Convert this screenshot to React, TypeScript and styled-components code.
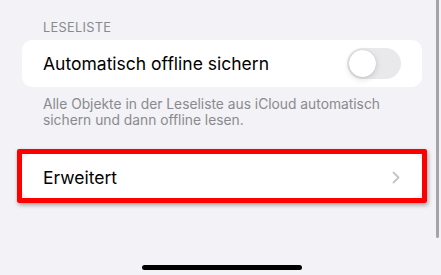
import React, {FC, useState} from 'react';
import styled, {createGlobalStyle} from "styled-components";

const GlobalStyle = createGlobalStyle`
  html, body {
    margin: 0;
    padding: 0;
    background: #f2f2f7;
  }

  body {
    font-family: Inter, "Liberation Sans", sans-serif;
    -webkit-font-smoothing: antialiased;
  }
`

type ToggleType = {
  checked: boolean
  onChange: (value: boolean) => void
}

const Toggle: FC<ToggleType> = ({checked, onChange}) => {
  return (
    <Track $on={checked} onClick={() => onChange(!checked)}>
      <Knob $on={checked}/>
    </Track>
  );
};

const Chevron = () => (
  <svg width="8" height="13" viewBox="0 0 8 13" fill="none">
    <path d="M1.5 1.5L6.5 6.5L1.5 11.5" stroke="#c4c4c7" strokeWidth="1.8" strokeLinecap="round"
          strokeLinejoin="round"/>
  </svg>
)

const App = () => {
  const [offline, setOffline] = useState(false)

  return (
    <Screen>
      <GlobalStyle/>
      <Content>
        <SectionHeader>LESELISTE</SectionHeader>
        <Card>
          <Row>
            <Label>Automatisch offline sichern</Label>
            <Toggle checked={offline} onChange={setOffline}/>
          </Row>
        </Card>
        <Footer>
          Alle Objekte in der Leseliste aus iCloud automatisch sichern und dann offline lesen.
        </Footer>

        <Highlight>
          <Card>
            <Row $compact>
              <Label>Erweitert</Label>
              <Chevron/>
            </Row>
          </Card>
        </Highlight>
      </Content>

      <ScrollBar/>
      <HomeIndicator/>
    </Screen>
  );
};

export default App;

const Screen = styled.div`
  position: relative;
  width: 441px;
  height: 275px;
  overflow: hidden;
  background: #f2f2f7;
`

const Content = styled.div`
  padding: 20px 19px 0 22px;
  display: flex;
  flex-direction: column;
`

const SectionHeader = styled.div`
  padding-left: 21px;
  font-size: 12.8px;
  line-height: 16px;
  letter-spacing: 0.3px;
  color: #8a8a8e;
  margin-bottom: 4px;
`

const Card = styled.div`
  background: #ffffff;
  border-radius: 10px;
  overflow: hidden;
`

const Row = styled.div<{ $compact?: boolean }>`
  height: ${({$compact}) => $compact ? '44px' : '47px'};
  padding: ${({$compact}) => $compact ? '2px 22px 0 21px' : '0 21px'};
  box-sizing: border-box;
  display: flex;
  align-items: center;
  justify-content: space-between;
`

const Label = styled.span`
  font-size: 17.5px;
  color: #000000;
`

const Track = styled.div<{ $on: boolean }>`
  position: relative;
  width: 54px;
  height: 31px;
  border-radius: 16px;
  background: ${({$on}) => $on ? '#34c759' : '#e9e9eb'};
  cursor: pointer;
  transition: background 0.2s;
`

const Knob = styled.div<{ $on: boolean }>`
  position: absolute;
  top: 2px;
  left: ${({$on}) => $on ? '25px' : '2px'};
  width: 27px;
  height: 27px;
  border-radius: 50%;
  background: #ffffff;
  box-shadow: 0 2px 6px rgba(0, 0, 0, 0.15), 0 0 1px rgba(0, 0, 0, 0.2);
  transition: left 0.2s;
`

const Footer = styled.p`
  margin: 9px 0 0;
  padding: 0 21px;
  font-size: 13.8px;
  line-height: 16px;
  color: #8a8a8e;
`

const Highlight = styled.div`
  margin: 21px -5px 0;
  border: 5px solid #ff0000;
  border-radius: 2px;
  box-shadow: 1px 2px 4px rgba(0, 0, 0, 0.35);
`

const ScrollBar = styled.div`
  position: absolute;
  top: 0;
  right: 2px;
  width: 3px;
  height: 238px;
  border-radius: 0 0 2px 2px;
  background: #a5a5a8;
`

const HomeIndicator = styled.div`
  position: absolute;
  left: 142px;
  bottom: 5px;
  width: 160px;
  height: 5px;
  border-radius: 3px;
  background: #000000;
`
